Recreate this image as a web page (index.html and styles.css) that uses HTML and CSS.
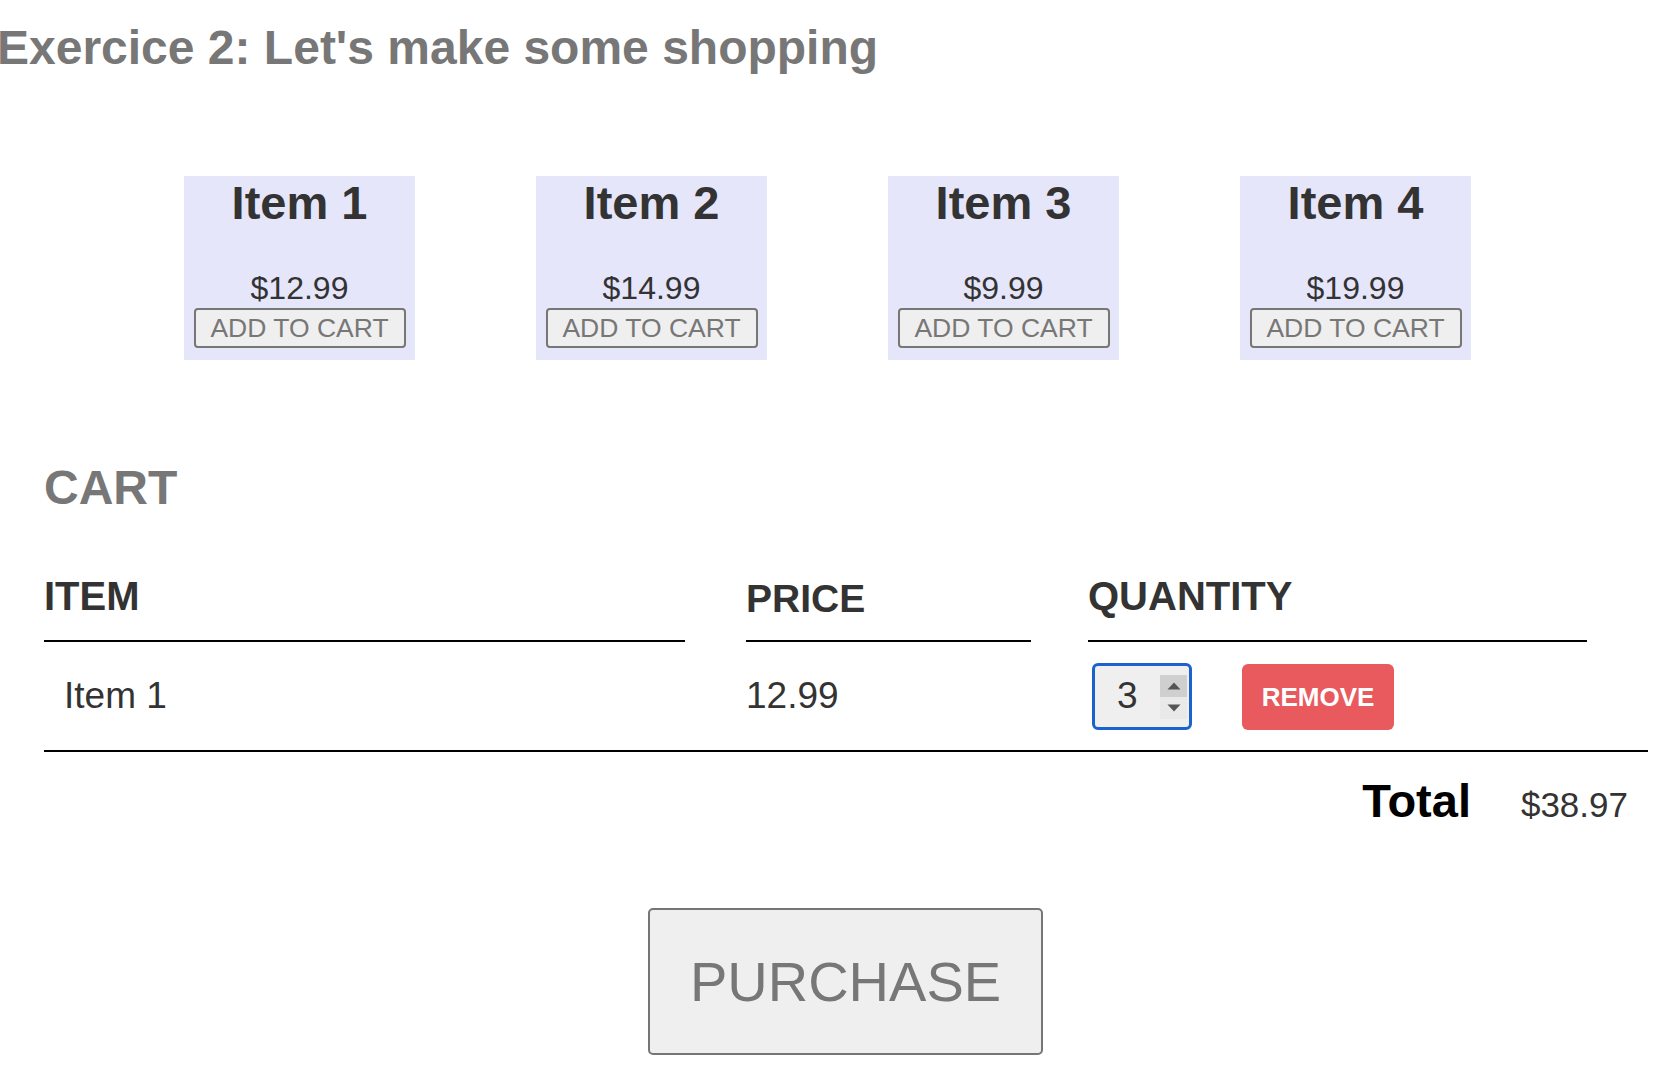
FILE: index.html
```html
<!DOCTYPE html>
<html lang="en">
<head>
<meta charset="utf-8">
<title>Exercice 2</title>
<link rel="stylesheet" href="styles.css">
</head>
<body>
<h1 class="title">Exercice 2: Let's make some shopping</h1>

<div class="products">
  <div class="card">
    <h2 class="card-name">Item 1</h2>
    <p class="card-price">$12.99</p>
    <button class="add-btn">ADD TO CART</button>
  </div>
  <div class="card">
    <h2 class="card-name">Item 2</h2>
    <p class="card-price">$14.99</p>
    <button class="add-btn">ADD TO CART</button>
  </div>
  <div class="card">
    <h2 class="card-name">Item 3</h2>
    <p class="card-price">$9.99</p>
    <button class="add-btn">ADD TO CART</button>
  </div>
  <div class="card">
    <h2 class="card-name">Item 4</h2>
    <p class="card-price">$19.99</p>
    <button class="add-btn">ADD TO CART</button>
  </div>
</div>

<section class="cart">
  <h2 class="cart-title">CART</h2>
  <div class="cart-head">
    <div class="th th-item">ITEM</div>
    <div class="th th-price">PRICE</div>
    <div class="th th-qty">QUANTITY</div>
  </div>
  <div class="cart-row">
    <div class="td td-item">Item 1</div>
    <div class="td td-price">12.99</div>
    <div class="td td-qty">
      <div class="qty-input">
        <span class="qty-value">3</span>
        <span class="spinner">
          <span class="spin spin-up"><svg class="arrow" width="14" height="8" viewBox="0 0 14 8"><path d="M0.5 7.5 L7 0.5 L13.5 7.5 Z" fill="#555"/></svg></span>
          <span class="spin spin-down"><svg class="arrow" width="14" height="8" viewBox="0 0 14 8"><path d="M0.5 0.5 L7 7.5 L13.5 0.5 Z" fill="#555"/></svg></span>
        </span>
      </div>
      <button class="remove-btn">REMOVE</button>
    </div>
  </div>
  <div class="total-row">
    <span class="total-label">Total</span>
    <span class="total-value">$38.97</span>
  </div>
</section>

<div class="purchase-wrap">
  <button class="purchase-btn">PURCHASE</button>
</div>
</body>
</html>
```

FILE: styles.css
```css
* { box-sizing: border-box; }

body {
  margin: 0;
  font-family: "Liberation Sans", Arial, Helvetica, sans-serif;
  color: #333;
  background: #fff;
}

.title {
  margin: 20px 0 0 -3px;
  font-size: 48px;
  line-height: 55px;
  font-weight: bold;
  color: #777;
}

.products {
  display: flex;
  gap: 121px;
  margin-top: 101px;
  padding-left: 184px;
}

.card {
  width: 231px;
  height: 184px;
  background: #e6e6fa;
  display: flex;
  flex-direction: column;
  align-items: center;
}

.card-name {
  margin: 0;
  font-size: 47px;
  line-height: 53px;
  font-weight: bold;
  color: #333;
}

.card-price {
  margin: 42px 0 0;
  font-size: 32px;
  line-height: 35px;
  color: #333;
}

.add-btn {
  margin-top: 2px;
  width: 212px;
  height: 40px;
  padding: 0;
  font-family: inherit;
  font-size: 26.5px;
  line-height: 36px;
  color: #777;
  background: #efefef;
  border: 2px solid #767676;
  border-radius: 4px;
}

.cart {
  padding: 0 20px 0 44px;
}

.cart-title {
  margin: 101px 0 0;
  font-size: 48px;
  line-height: 54px;
  font-weight: bold;
  color: #777;
}

.cart-head {
  display: flex;
  margin-top: 59px;
}

.th {
  font-size: 40px;
  line-height: 45px;
  font-weight: bold;
  color: #333;
  padding-bottom: 21px;
  border-bottom: 2px solid #000;
}

.th-item { width: 641px; margin-right: 61px; }
.th-price { width: 285px; margin-right: 57px; font-size: 39px; padding-top: 2px; padding-bottom: 19px; }
.th-qty { width: 499px; }

.cart-row {
  display: flex;
  align-items: center;
  height: 110px;
  border-bottom: 2px solid #000;
}

.td {
  font-size: 37px;
  color: #333;
}

.td-item { width: 702px; padding-left: 20px; }
.td-price { width: 342px; }
.td-qty {
  display: flex;
  align-items: center;
  gap: 50px;
  padding-left: 4px;
}

.qty-input {
  position: relative;
  width: 100px;
  height: 67px;
  border: 3px solid #1a62cc;
  border-radius: 6px;
  background: #efefef;
  display: flex;
  align-items: center;
}

.qty-value {
  margin-left: 22px;
  font-size: 37px;
  line-height: 40px;
  color: #333;
}

.spinner {
  position: absolute;
  left: 65px;
  top: 9px;
  width: 27px;
  height: 44px;
  display: flex;
  flex-direction: column;
}

.spin {
  flex: 1;
  display: flex;
  align-items: center;
  justify-content: center;
}

.arrow {
  flex-shrink: 0;
  display: block;
}

.spin-up { background: #cfcfcf; }
.spin-down { background: #e9e9e9; }

.remove-btn {
  margin-top: 2px;
  width: 152px;
  height: 66px;
  padding: 0;
  font-family: inherit;
  font-size: 26px;
  font-weight: bold;
  color: #fff;
  background: #e85a5e;
  border: none;
  border-radius: 6px;
}

.total-row {
  display: flex;
  justify-content: flex-end;
  align-items: baseline;
  gap: 50px;
  margin-top: 23px;
  padding-right: 20px;
}

.total-label {
  font-size: 47px;
  line-height: 52px;
  font-weight: bold;
  color: #000;
}

.total-value {
  font-size: 35px;
  color: #333;
}

.purchase-wrap {
  margin-top: 81px;
  padding-left: 648px;
}

.purchase-btn {
  width: 395px;
  height: 147px;
  padding: 0;
  font-family: inherit;
  font-size: 56px;
  color: #777;
  background: #efefef;
  border: 2px solid #767676;
  border-radius: 5px;
}
```
